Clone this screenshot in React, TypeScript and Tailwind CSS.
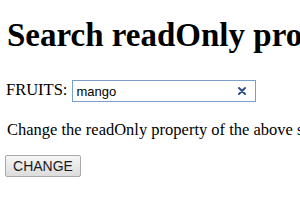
import { useState } from "react";

export default function App() {
  const [value, setValue] = useState("mango");
  const [readOnly, setReadOnly] = useState(false);

  return (
    <div className="w-[300px] h-[210px] overflow-hidden bg-white text-black font-['Liberation_Serif',serif] text-[16.5px]">
      <div className="px-2 pt-[17px]">
        <h1 className="-ml-[1px] whitespace-nowrap text-[33px] font-bold leading-[37px]">
          Search readOnly property
        </h1>

        <div className="mt-[26px] flex h-[22px] items-center whitespace-nowrap">
          <span className="-ml-[2px] mb-[3px] leading-[19px]">FRUITS:</span>
          <div className="ml-[5px] flex h-[22px] w-[184px] items-center border border-[#7b9fcb] bg-white">
            <input
              type="text"
              value={value}
              readOnly={readOnly}
              onChange={(e) => setValue(e.target.value)}
              className="h-full min-w-0 flex-1 bg-transparent pl-[3px] font-['Liberation_Sans',sans-serif] text-[13px] text-black outline-none"
            />
            {value && !readOnly && (
              <button
                onClick={() => setValue("")}
                className="mr-[7px] flex h-[12px] w-[12px] items-center justify-center"
              >
                <svg width="10" height="10" viewBox="0 0 10 10">
                  <path d="M2 2 L8 8 M8 2 L2 8" stroke="#2b5183" strokeWidth="2" strokeLinecap="round" />
                </svg>
              </button>
            )}
          </div>
        </div>

        <p className="-ml-[1px] mt-[18px] whitespace-nowrap leading-[19px]">
          Change the readOnly property of the above search field.
        </p>

        <button
          onClick={() => setReadOnly(!readOnly)}
          className="-ml-[3px] mt-[16px] h-[22px] w-[76px] rounded-[2px] border border-[#a9a9a9] bg-gradient-to-b from-[#f6f6f6] to-[#dcdcdc] font-['Liberation_Sans',sans-serif] text-[14px] text-[#1a1a1a]"
        >
          CHANGE
        </button>
      </div>
    </div>
  );
}
